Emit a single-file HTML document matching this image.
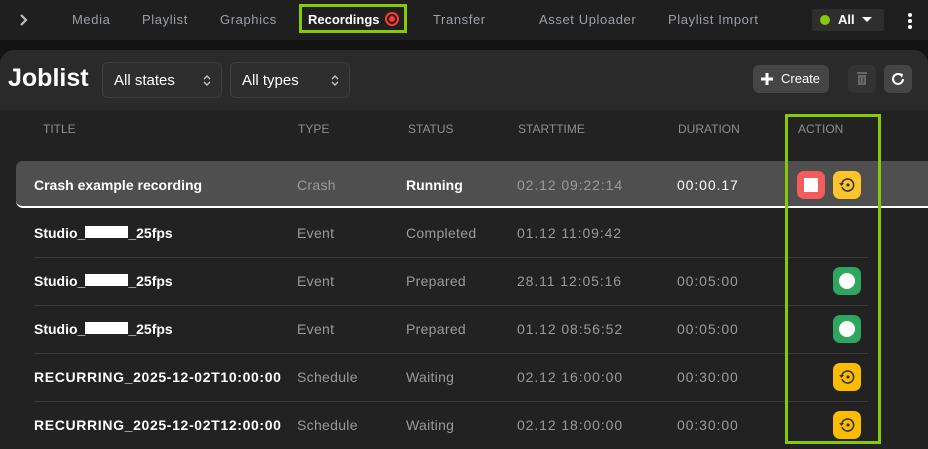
<!DOCTYPE html>
<html><head><meta charset="utf-8"><style>
*{margin:0;padding:0;box-sizing:border-box}
html,body{width:928px;height:449px;overflow:hidden}
body{background:#131313;font-family:"Liberation Sans",Arial,sans-serif;position:relative;color:#fff}
.a{position:absolute}
.top{left:0;top:0;width:928px;height:40px;background:#1f1f1f}
.nav{top:12px;font-size:13px;color:#9aa0a6;letter-spacing:.6px}
.panel{left:0;top:50px;width:928px;height:399px;background:#222;border-radius:14px 14px 0 0}
.phead{left:0;top:50px;width:928px;height:60px;background:#2a2a2a;border-radius:14px 14px 0 0}
.sel{top:62px;height:36px;border:1px solid #3f3f3f;border-radius:6px;background:#2e2e2e;font-size:15px;padding:9px 11px;color:#fff}
.sel svg{position:absolute;right:10px;top:11px}
.th{top:122px;font-size:12px;color:#8a8f94}
.row{left:34px;width:834px;border-bottom:1px solid #3a3a3a;height:48px}
.t{font-size:14px}
.b{font-weight:bold;color:#fff}
.g{color:#9a9a9a;letter-spacing:.3px}
.d{letter-spacing:.9px}
.btn{width:28px;height:28px;border-radius:7px}
.dot{width:16px;height:16px;border-radius:50%;background:#fff;position:absolute;left:6px;top:6px}
</style></head><body>
<div class="a top"></div>
<svg class="a" style="left:18px;top:13px" width="12" height="14" viewBox="0 0 12 14"><path d="M3 2l5 5-5 5" stroke="#b8bcc0" stroke-width="2.2" fill="none"/></svg>
<div class="a nav" style="left:72px">Media</div>
<div class="a nav" style="left:142px">Playlist</div>
<div class="a nav" style="left:220px">Graphics</div>
<div class="a" style="left:299px;top:4px;width:108px;height:29px;border:3px solid #86c80a"></div>
<div class="a nav" style="left:308px;color:#fff;font-weight:bold;letter-spacing:0">Recordings</div>
<div class="a" style="left:385px;top:12px;width:14px;height:14px;border-radius:50%;border:2px solid #ff3a2a"></div>
<div class="a" style="left:389px;top:16px;width:6px;height:6px;border-radius:50%;background:#ff3a2a"></div>
<div class="a nav" style="left:433px">Transfer</div>
<div class="a nav" style="left:539px">Asset Uploader</div>
<div class="a nav" style="left:668px">Playlist Import</div>
<div class="a" style="left:812px;top:9px;width:72px;height:22px;background:#2e2e2e;border-radius:2px"></div>
<div class="a" style="left:820px;top:15px;width:10px;height:10px;border-radius:50%;background:#86c80a"></div>
<div class="a" style="left:838px;top:12px;font-size:13px;font-weight:bold">All</div>
<svg class="a" style="left:861px;top:16px" width="12" height="8"><path d="M1 1h10L6 6z" fill="#fff"/></svg>
<div class="a" style="left:908px;top:13px;width:4px;height:4px;background:#fff;border-radius:2px;box-shadow:0 6px 0 #fff,0 12px 0 #fff"></div>

<div class="a panel"></div>
<div class="a phead"></div>
<div class="a" style="left:8px;top:64px;font-size:25px;font-weight:bold">Joblist</div>
<div class="a sel" style="left:102px;width:120px">All states<svg width="8" height="13"><path d="M1 5l3-3 3 3M1 8l3 3 3-3" stroke="#ccc" stroke-width="1.3" fill="none"/></svg></div>
<div class="a sel" style="left:230px;width:120px">All types<svg width="8" height="13"><path d="M1 5l3-3 3 3M1 8l3 3 3-3" stroke="#ccc" stroke-width="1.3" fill="none"/></svg></div>
<div class="a" style="left:753px;top:65px;width:76px;height:28px;background:#454545;border-radius:6px"></div>
<svg class="a" style="left:760px;top:72px" width="14" height="14"><path d="M7 1v12M1 7h12" stroke="#fff" stroke-width="3"/></svg>
<div class="a" style="left:781px;top:71px;font-size:13px">Create</div>
<div class="a" style="left:848px;top:65px;width:28px;height:28px;background:#333;border-radius:6px"></div>
<svg class="a" style="left:856px;top:71px" width="12" height="15"><rect x="1" y="1" width="10" height="2" fill="#666"/><rect x="2" y="4" width="8" height="10" fill="#666"/><path d="M4.5 6v6M7.5 6v6" stroke="#444"/></svg>
<div class="a" style="left:884px;top:65px;width:28px;height:28px;background:#454545;border-radius:6px"></div>
<svg class="a" style="left:890px;top:71px" width="16" height="16"><path d="M13 8a5 5 0 1 1-2-4" stroke="#fff" stroke-width="2" fill="none"/><path d="M9 2l4 1-1 4z" fill="#fff"/></svg>

<div class="a th" style="left:43px">TITLE</div>
<div class="a th" style="left:298px">TYPE</div>
<div class="a th" style="left:408px">STATUS</div>
<div class="a th" style="left:518px">STARTTIME</div>
<div class="a th" style="left:678px">DURATION</div>
<div class="a th" style="left:798px">ACTION</div>

<div class="a row" style="top:210px"></div>
<div class="a row" style="top:258px"></div>
<div class="a row" style="top:306px"></div>
<div class="a row" style="top:354px"></div>
<div class="a row" style="top:402px"></div>

<div class="a" style="left:16px;top:161px;width:912px;height:47px;background:#4f4f4f;border-radius:7px 0 0 7px;border-bottom:2px solid #fff"></div>

<div class="a t b" style="left:34px;top:177px">Crash example recording</div>
<div class="a t g" style="left:297px;top:177px">Crash</div>
<div class="a t b" style="left:406px;top:177px">Running</div>
<div class="a t g d" style="left:517px;top:177px">02.12 09:22:14</div>
<div class="a t d" style="left:677px;top:177px">00:00.17</div>

<div class="a t b" style="left:34px;top:225px">Studio_<span style="display:inline-block;width:43px;height:12px;background:#fff"></span>_25fps</div>
<div class="a t g" style="left:297px;top:225px">Event</div>
<div class="a t g" style="left:406px;top:225px">Completed</div>
<div class="a t g d" style="left:517px;top:225px">01.12 11:09:42</div>

<div class="a t b" style="left:34px;top:273px">Studio_<span style="display:inline-block;width:43px;height:12px;background:#fff"></span>_25fps</div>
<div class="a t g" style="left:297px;top:273px">Event</div>
<div class="a t g" style="left:406px;top:273px">Prepared</div>
<div class="a t g d" style="left:517px;top:273px">28.11 12:05:16</div>
<div class="a t g d" style="left:677px;top:273px">00:05:00</div>

<div class="a t b" style="left:34px;top:321px">Studio_<span style="display:inline-block;width:43px;height:12px;background:#fff"></span>_25fps</div>
<div class="a t g" style="left:297px;top:321px">Event</div>
<div class="a t g" style="left:406px;top:321px">Prepared</div>
<div class="a t g d" style="left:517px;top:321px">01.12 08:56:52</div>
<div class="a t g d" style="left:677px;top:321px">00:05:00</div>

<div class="a t b" style="left:34px;top:369px;letter-spacing:.65px">RECURRING_2025-12-02T10:00:00</div>
<div class="a t g" style="left:297px;top:369px">Schedule</div>
<div class="a t g" style="left:406px;top:369px">Waiting</div>
<div class="a t g d" style="left:517px;top:369px">02.12 16:00:00</div>
<div class="a t g d" style="left:677px;top:369px">00:30:00</div>

<div class="a t b" style="left:34px;top:417px;letter-spacing:.65px">RECURRING_2025-12-02T12:00:00</div>
<div class="a t g" style="left:297px;top:417px">Schedule</div>
<div class="a t g" style="left:406px;top:417px">Waiting</div>
<div class="a t g d" style="left:517px;top:417px">02.12 18:00:00</div>
<div class="a t g d" style="left:677px;top:417px">00:30:00</div>

<div class="a btn" style="left:797px;top:171px;background:#f45b5b"><div style="position:absolute;left:7px;top:7px;width:14px;height:14px;background:#fff"></div></div>
<div class="a btn" style="left:833px;top:171px;background:#fcc52c"><svg width="28" height="28"><path d="M9 12a6 6 0 1 1 0 4" stroke="#333" stroke-width="1.6" fill="none"/><path d="M6 12h5l-2.5 3z" fill="#333"/><circle cx="15" cy="14" r="1.6" fill="#333"/></svg></div>
<div class="a btn" style="left:833px;top:267px;background:#2ea660"><div class="dot"></div></div>
<div class="a btn" style="left:833px;top:315px;background:#2ea660"><div class="dot"></div></div>
<div class="a btn" style="left:833px;top:363px;background:#fcbc00"><svg width="28" height="28"><path d="M9 12a6 6 0 1 1 0 4" stroke="#333" stroke-width="1.6" fill="none"/><path d="M6 12h5l-2.5 3z" fill="#333"/><circle cx="15" cy="14" r="1.6" fill="#333"/></svg></div>
<div class="a btn" style="left:833px;top:411px;background:#fcbc00"><svg width="28" height="28"><path d="M9 12a6 6 0 1 1 0 4" stroke="#333" stroke-width="1.6" fill="none"/><path d="M6 12h5l-2.5 3z" fill="#333"/><circle cx="15" cy="14" r="1.6" fill="#333"/></svg></div>

<div class="a" style="left:785px;top:114px;width:96px;height:330px;border:3px solid #86c80a"></div>
</body></html>
